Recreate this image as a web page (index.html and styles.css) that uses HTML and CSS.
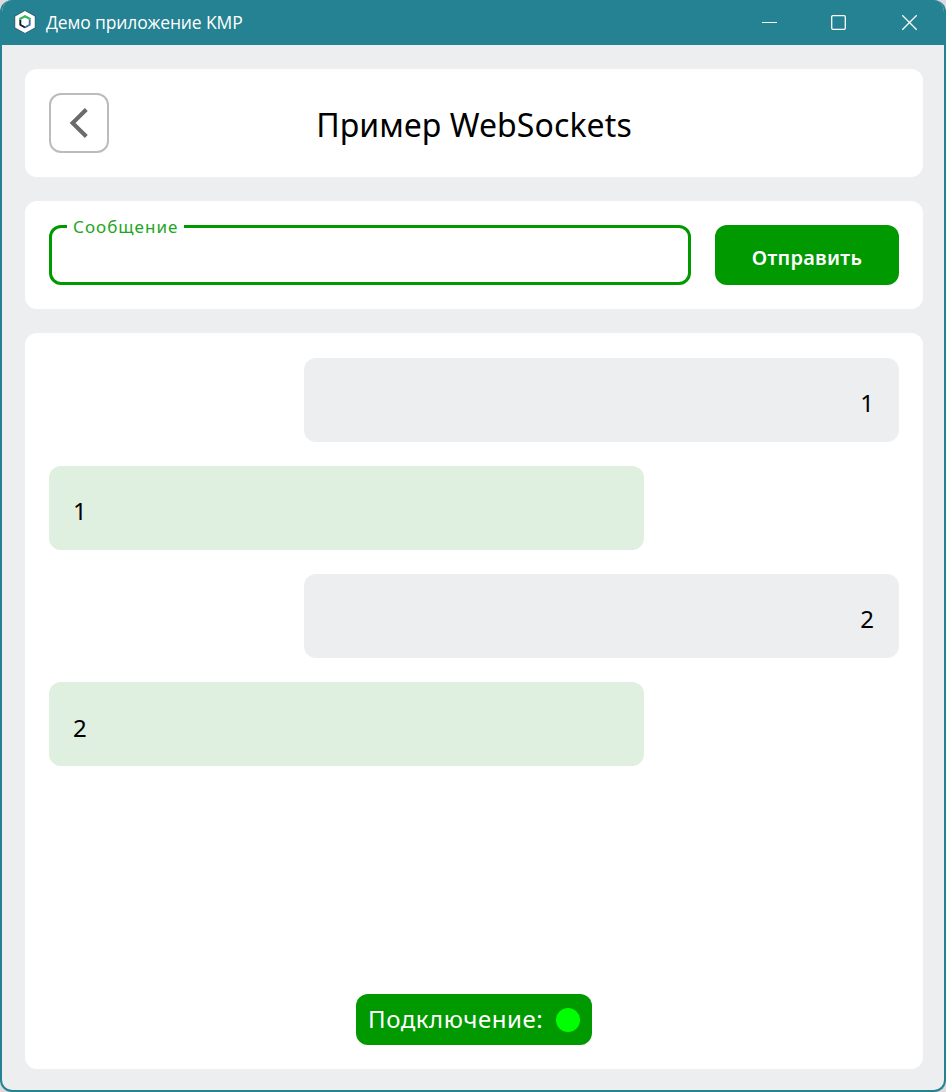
FILE: index.html
```html
<!DOCTYPE html>
<html lang="ru">
<head>
<meta charset="utf-8">
<title>Демо приложение KMP</title>
<link rel="stylesheet" href="styles.css">
</head>
<body>
<div class="window">
  <header class="titlebar">
    <svg class="app-icon" width="22" height="24" viewBox="0 0 22 24">
      <path d="M11 .6 21.2 6.2V17.8L11 23.4 .8 17.8V6.2Z" fill="#fff" stroke="#0b2b46" stroke-width=".6"/>
      <path d="M11 6.4 15.8 9.2V14.8L11 17.6 6.2 14.8V9.2Z" fill="#fff"/>
      <path d="M6.3 9.4V14.7L11 17.5" fill="none" stroke="#0a1c2c" stroke-width="1.9"/>
      <path d="M15.7 9.4V14.7L11 17.5" fill="none" stroke="#3c6fb8" stroke-width="1.9"/>
      <path d="M5.4 9.3 11 6.2 16.6 9.3" fill="none" stroke="#36b563" stroke-width="2.2"/>
    </svg>
    <span class="app-name">Демо приложение KMP</span>
    <svg class="controls" width="156" height="16" viewBox="0 0 156 16" fill="none" stroke="#fff">
      <path d="M0 7.5H15"/>
      <rect x="69.7" y=".7" width="13.6" height="13.6" rx="1.2" stroke-width="1.3"/>
      <path d="M140.3.3 154.7 14.7M154.7.3 140.3 14.7" stroke-width="1.3"/>
    </svg>
  </header>
  <main class="content">
    <section class="panel heading">
      <button class="back" aria-label="Назад">
        <svg width="60" height="60" viewBox="0 0 60 60"><path d="M37.3 16.5 23.6 30 37.3 43.5" fill="none" stroke="#6b6b6b" stroke-width="4.1"/></svg>
      </button>
      <h1 class="title">Пример WebSockets</h1>
    </section>
    <section class="panel composer">
      <fieldset class="field"><legend class="label"><span class="label-text">Сообщение</span></legend></fieldset>
      <button class="send"><span class="send-text">Отправить</span></button>
    </section>
    <section class="panel chat">
      <div class="message outgoing">1</div>
      <div class="message incoming">1</div>
      <div class="message outgoing">2</div>
      <div class="message incoming">2</div>
      <div class="status"><span class="status-text">Подключение:</span><i class="dot"></i></div>
    </section>
  </main>
</div>
</body>
</html>
```
FILE: styles.css
```css
* { box-sizing: border-box; }
body { margin: 0; background: #dcdcdc; font-family: "Noto Sans", "Open Sans", sans-serif; color: #000; }
button { margin: 0; padding: 0; font: inherit; }
.window { display: flex; flex-direction: column; height: 1092px; border: 2px solid #258292; border-top: 0; border-radius: 12px; background: #edeef0; overflow: hidden; }
.titlebar { display: flex; align-items: center; flex: none; height: 45px; padding: 0 26px 0 12px; background: #258292; }
.app-icon { flex: none; margin-bottom: 1px; }
.app-name { margin: 0 0 2px 10px; font: 17.5px/24px "Open Sans", sans-serif; color: #fff; letter-spacing: -.14px; white-space: nowrap; }
.controls { margin-left: auto; }
.content { display: flex; flex-direction: column; flex: 1; gap: 24px; padding: 24px 21px 21px 23px; }
.panel { padding: 24px; border-radius: 12px; background: #fff; }
.heading { display: grid; grid-template-columns: 60px 1fr 60px; height: 108px; }
.back { display: flex; width: 60px; height: 60px; border: 0; border-radius: 12px; background: #fff; box-shadow: inset 0 0 0 2px #bcbcbc; }
.title { margin: 2px 0 0; font-size: 32px; line-height: 60px; font-weight: 400; letter-spacing: .1px; text-align: center; white-space: nowrap; }
.composer { display: flex; gap: 24px; height: 108px; }
.field { flex: 1; min-width: 0; height: 71px; margin: -11px 0 0; padding: 0 0 0 15px; border: 3px solid #090; border-radius: 12px; }
.label { height: 24px; padding: 0 6px; line-height: 26px; }
.label-text { font-size: 17px; letter-spacing: 1.02px; color: #22a622; }
.send { width: 184px; height: 60px; border: 0; border-radius: 12px; background: #090; color: #fff; font-size: 20px; font-weight: 600; letter-spacing: .25px; line-height: 66px; }
.chat { display: flex; flex-direction: column; gap: 24px; flex: 1; padding-top: 24.6px; }
.message { width: 595.3px; height: 84.2px; padding: 5.4px 25px 0; border-radius: 12px; font-size: 24px; line-height: 80px; }
.outgoing { align-self: flex-end; background: #edeef0; text-align: right; }
.incoming { padding-left: 24px; background: #dfefe0; }
.status { display: flex; align-items: center; justify-content: space-between; align-self: center; width: 236px; height: 51px; margin-top: auto; padding: 0 12px; border-radius: 12px; background: #090; color: #fff; font-size: 24px; }
.status-text { margin-bottom: 2px; letter-spacing: .55px; white-space: nowrap; }
.dot { width: 24px; height: 24px; border-radius: 50%; background: #0f0; }
```
